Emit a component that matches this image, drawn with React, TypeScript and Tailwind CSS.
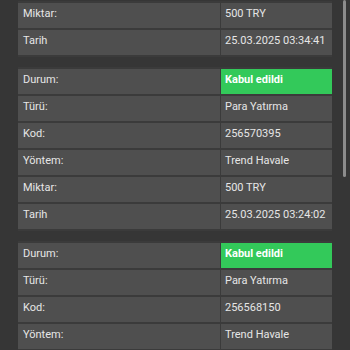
import React from "react";

type Row = { label: string; value: string; status?: boolean };

// the list is scrolled, so only the tail of the first entry shows
const deposits: Row[][] = [
  [
    { label: "Miktar:", value: "500 TRY" },
    { label: "Tarih", value: "25.03.2025 03:34:41" },
  ],
  [
    { label: "Durum:", value: "Kabul edildi", status: true },
    { label: "Türü:", value: "Para Yatırma" },
    { label: "Kod:", value: "256570395" },
    { label: "Yöntem:", value: "Trend Havale" },
    { label: "Miktar:", value: "500 TRY" },
    { label: "Tarih", value: "25.03.2025 03:24:02" },
  ],
  [
    { label: "Durum:", value: "Kabul edildi", status: true },
    { label: "Türü:", value: "Para Yatırma" },
    { label: "Kod:", value: "256568150" },
    { label: "Yöntem:", value: "Trend Havale" },
  ],
];

const HistoryTable = ({ rows }: { rows: Row[] }) => (
  <div className="grid grid-cols-[202px_111px] gap-x-[1px] gap-y-[2px] py-[2px] bg-[#3b3b3b] w-[314px]">
    {rows.map((row) => (
      <React.Fragment key={row.label}>
        <div className="h-[25px] bg-[#4f4f4f] pl-[5px] pt-[4px] leading-[14px] text-[11px] text-[#e6e6e6]">
          {row.label}
        </div>
        <div
          className={
            row.status
              ? "h-[25px] bg-[#33c95a] pl-[4px] pt-[4px] leading-[14px] text-[11px] font-bold text-white"
              : "h-[25px] bg-[#4f4f4f] pl-[4px] pt-[4px] leading-[14px] text-[11px] text-[#e6e6e6]"
          }
        >
          {row.value}
        </div>
      </React.Fragment>
    ))}
  </div>
);

export default function App() {
  return (
    <div
      className="relative w-[350px] h-[350px] overflow-hidden bg-[#363636]"
      style={{ fontFamily: "Roboto, 'Noto Sans', sans-serif" }}
    >
      <div className="flex flex-col gap-[10px] pl-[18px] pt-[1px]">
        {deposits.map((rows, i) => (
          <HistoryTable key={i} rows={rows} />
        ))}
      </div>
      {/* scrollbar */}
      <div className="absolute top-0 left-[343px] w-[3px] h-[177px] bg-[#8c8c8c] rounded-full" />
    </div>
  );
}
